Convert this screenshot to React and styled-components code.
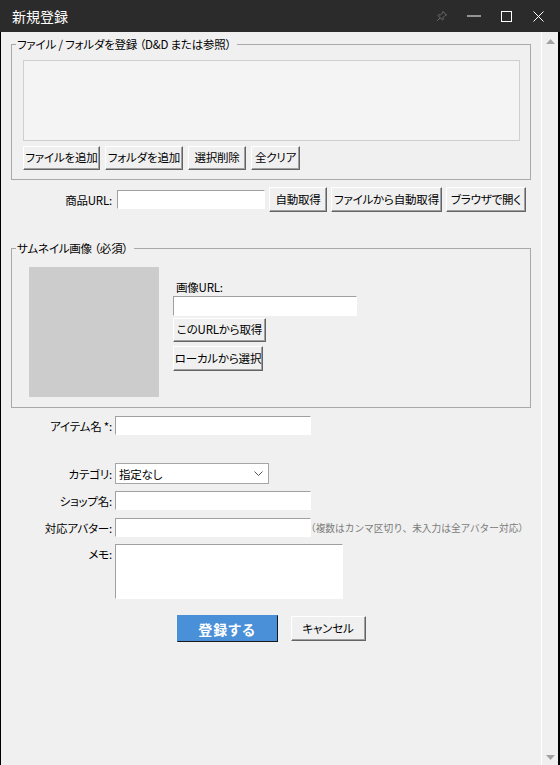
import React from 'react';
import styled, { createGlobalStyle } from 'styled-components';

const GlobalStyle = createGlobalStyle`
  html, body { margin: 0; padding: 0; background: #000; }
  body {
    font-family: "Noto Sans CJK JP", "Noto Sans", sans-serif;
    font-size: 11.5px;
    font-feature-settings: "palt";
    letter-spacing: -0.2px;
    color: #000;
  }
  * { box-sizing: border-box; }
`;

const Window = styled.div`
  width: 560px;
  height: 765px;
  display: flex;
  flex-direction: column;
  background: #000;
  overflow: hidden;
`;

const TitleBar = styled.div`
  height: 32px;
  flex: none;
  background: #2b2b2b;
  display: flex;
  align-items: center;
  padding-left: 12px;
  color: #fff;
`;

const Title = styled.div`
  flex: 1;
  font-size: 14px;
  line-height: 20px;
  letter-spacing: 0;
`;

const Controls = styled.div`
  display: flex;
  height: 100%;
  padding-right: 6px;
`;

const Ctl = styled.div`
  width: 32px;
  display: flex;
  align-items: center;
  justify-content: center;
`;

const Body = styled.div`
  flex: 1;
  min-height: 0;
  display: flex;
  margin: 0 2px 0 1px;
`;

const Main = styled.div`
  flex: 1;
  background: #f0f0f0;
  padding: 5px 0 0 10px;
  overflow: hidden;
`;

const ScrollBar = styled.div`
  width: 17px;
  flex: none;
  border-left: 1px solid #ffffff;
  background: #f0f0f0;
  display: flex;
  flex-direction: column;
  justify-content: space-between;
  align-items: center;
  padding: 7px 0 5px;
`;

const Group = styled.fieldset`
  width: 520px;
  margin: ${p => p.$mt || 0}px 0 0;
  padding: 0;
  border: 1px solid #a9a9a9;
  min-inline-size: 0;
`;

const Legend = styled.legend`
  margin-left: 4px;
  padding: 0 6px 0 1px;
  line-height: 14px;
`;

const FilesBody = styled.div`
  padding: 9px 9px 9px 11px;
  display: flex;
  flex-direction: column;
  gap: 5px;
`;

const FileList = styled.div`
  width: 497px;
  height: 81px;
  background: #f4f4f4;
  border: 1px solid #cfcfcf;
`;

const ButtonRow = styled.div`
  display: flex;
  align-items: center;
  gap: ${p => p.$gap ?? 5}px;
  margin-left: ${p => p.$ml || 0}px;
`;

const Btn = styled.button`
  width: ${p => p.$w}px;
  height: ${p => p.$h || 24}px;
  margin-top: ${p => p.$mt || 0}px;
  padding: 0;
  font: inherit;
  letter-spacing: inherit;
  line-height: 1;
  color: #000;
  background: #f0f0f0;
  border: 1px solid;
  border-color: #ffffff #646464 #646464 #ffffff;
  box-shadow: inset -1px -1px 0 #a0a0a0;
  white-space: nowrap;
  flex: none;
`;

const PrimaryBtn = styled.button`
  width: 101px;
  height: 27px;
  padding: 0;
  font: inherit;
  font-size: 14px;
  font-weight: bold;
  letter-spacing: 1px;
  color: #fff;
  background: #4a90d9;
  border: 1px solid;
  border-color: #4a90d9 #1a1a1a #1a1a1a #4a90d9;
  flex: none;
`;

const FieldRow = styled.div`
  display: flex;
  align-items: ${p => (p.$top ? 'flex-start' : 'center')};
  margin-top: ${p => p.$mt || 0}px;
`;

const FieldLabel = styled.label`
  width: 101px;
  flex: none;
  text-align: right;
  margin-right: ${p => p.$gap ?? 3}px;
  padding-top: ${p => (p.$top ? 3 : 0)}px;
  line-height: 14px;
  white-space: nowrap;
`;

const TextInput = styled.input`
  position: relative;
  z-index: 1;
  width: ${p => p.$w}px;
  height: ${p => p.$h || 19}px;
  flex: none;
  margin: 0;
  padding: 0 2px;
  font: inherit;
  background: #fff;
  border: 1px solid;
  border-color: #a0a0a0 #ffffff #ffffff #a0a0a0;
  outline: none;
`;

const TextArea = styled.textarea`
  width: 228px;
  height: 55px;
  flex: none;
  margin: 0;
  padding: 2px;
  font: inherit;
  resize: none;
  background: #fff;
  border: 1px solid;
  border-color: #a0a0a0 #ffffff #ffffff #a0a0a0;
  outline: none;
`;

const SelectBox = styled.div`
  width: 154px;
  height: 21px;
  flex: none;
  background: #fff;
  border: 1px solid #a6a6a6;
  display: flex;
  align-items: center;
  justify-content: space-between;
  padding: 0 5px 0 3px;
`;

const Hint = styled.span`
  margin-left: -5px;
  flex: none;
  white-space: nowrap;
  font-size: 9.7px;
  font-feature-settings: normal;
  letter-spacing: 0;
  color: #7a7a7a;
`;

const ThumbBody = styled.div`
  display: flex;
  align-items: flex-start;
  padding: 12px 0 10px 17px;
`;

const Thumb = styled.div`
  width: 130px;
  height: 130px;
  background: #cccccc;
  flex: none;
`;

const ThumbSide = styled.div`
  display: flex;
  flex-direction: column;
  align-items: flex-start;
  margin-left: 14px;
  padding-top: 11px;
`;

const SideLabel = styled.div`
  margin-left: 3px;
  line-height: 18px;
`;

const Actions = styled.div`
  width: 520px;
  display: flex;
  justify-content: center;
  align-items: center;
  gap: 13px;
  margin-top: 16px;
`;

const Arrow = ({ down }) => (
  <svg width="9" height="5" viewBox="0 0 9 5">
    <path d={down ? 'M0 0 H9 L4.5 5 Z' : 'M0 5 H9 L4.5 0 Z'} fill="#a3a3a3" />
  </svg>
);

export default function App() {
  return (
    <>
      <GlobalStyle />
      <Window>
        <TitleBar>
          <Title>新規登録</Title>
          <Controls>
            <Ctl>
              <svg width="12" height="12" viewBox="0 0 12 12" fill="none" stroke="#6b6b6b" strokeWidth="1">
                <path d="M7 1.5 L10.5 5 L9 5.5 L7 7.5 L7.3 9.3 L6.5 10 L2 5.5 L2.7 4.7 L4.5 5 L6.5 3 Z" />
                <path d="M4.2 7.8 L1.2 10.8" />
              </svg>
            </Ctl>
            <Ctl>
              <svg width="14" height="2" viewBox="0 0 14 2">
                <path d="M0 1 H14" stroke="#fff" strokeWidth="1" />
              </svg>
            </Ctl>
            <Ctl>
              <svg width="11" height="11" viewBox="0 0 11 11">
                <rect x="0.5" y="0.5" width="10" height="10" fill="none" stroke="#fff" strokeWidth="1" />
              </svg>
            </Ctl>
            <Ctl>
              <svg width="11" height="11" viewBox="0 0 11 11">
                <path d="M0.5 0.5 L10.5 10.5 M10.5 0.5 L0.5 10.5" stroke="#fff" strokeWidth="1" />
              </svg>
            </Ctl>
          </Controls>
        </TitleBar>
        <Body>
          <Main>
            <Group>
              <Legend>ファイル / フォルダを登録 （D&amp;D または参照）</Legend>
              <FilesBody>
                <FileList />
                <ButtonRow>
                  <Btn $w={77}>ファイルを追加</Btn>
                  <Btn $w={78}>フォルダを追加</Btn>
                  <Btn $w={58}>選択削除</Btn>
                  <Btn $w={49}>全クリア</Btn>
                </ButtonRow>
              </FilesBody>
            </Group>

            <FieldRow $mt={7}>
              <FieldLabel $gap={5}>商品URL:</FieldLabel>
              <TextInput $w={148} />
              <ButtonRow $gap={4} $ml={4}>
                <Btn $w={58} $h={25}>自動取得</Btn>
                <Btn $w={111} $h={25}>ファイルから自動取得</Btn>
                <Btn $w={80} $h={25}>ブラウザで開く</Btn>
              </ButtonRow>
            </FieldRow>

            <Group $mt={29}>
              <Legend>サムネイル画像 （必須）</Legend>
              <ThumbBody>
                <Thumb />
                <ThumbSide>
                  <SideLabel>画像URL:</SideLabel>
                  <TextInput $w={184} $h={20} />
                  <Btn $w={93} $mt={2}>このURLから取得</Btn>
                  <Btn $w={90} $h={25} $mt={4}>ローカルから選択</Btn>
                </ThumbSide>
              </ThumbBody>
            </Group>

            <FieldRow $mt={8}>
              <FieldLabel>アイテム名 *:</FieldLabel>
              <TextInput $w={196} />
            </FieldRow>

            <FieldRow $mt={28}>
              <FieldLabel>カテゴリ:</FieldLabel>
              <SelectBox>
                <span>指定なし</span>
                <svg width="9" height="5" viewBox="0 0 9 5">
                  <path d="M0.5 0.5 L4.5 4.5 L8.5 0.5" fill="none" stroke="#555" strokeWidth="1" />
                </svg>
              </SelectBox>
            </FieldRow>

            <FieldRow $mt={7}>
              <FieldLabel>ショップ名:</FieldLabel>
              <TextInput $w={196} />
            </FieldRow>

            <FieldRow $mt={8}>
              <FieldLabel>対応アバター:</FieldLabel>
              <TextInput $w={196} />
              <Hint>（複数はカンマ区切り、未入力は全アバター対応）</Hint>
            </FieldRow>

            <FieldRow $mt={7} $top>
              <FieldLabel $top>メモ:</FieldLabel>
              <TextArea />
            </FieldRow>

            <Actions>
              <PrimaryBtn>登録する</PrimaryBtn>
              <Btn $w={75} $h={25}>キャンセル</Btn>
            </Actions>
          </Main>
          <ScrollBar>
            <Arrow />
            <Arrow down />
          </ScrollBar>
        </Body>
      </Window>
    </>
  );
}
